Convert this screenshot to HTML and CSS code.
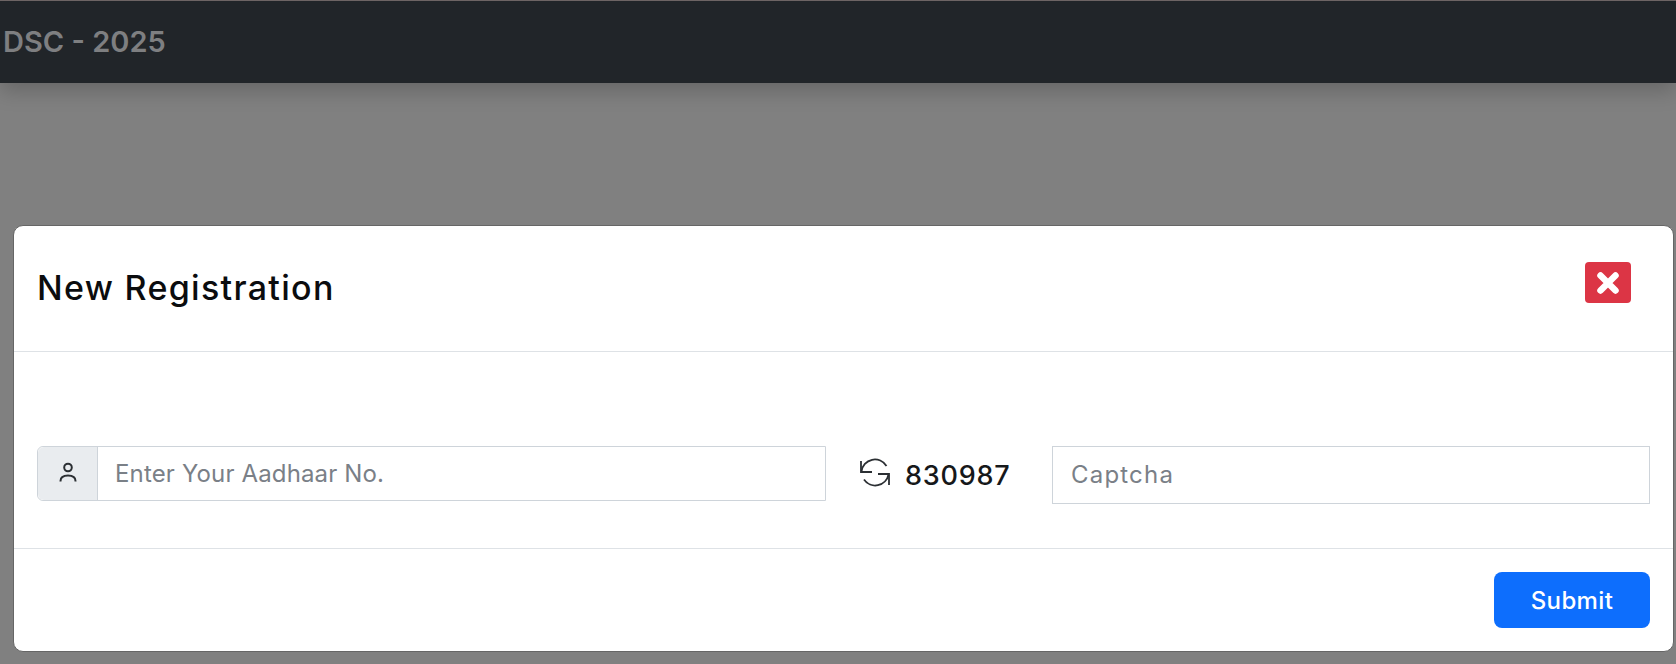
FILE: index.html

```html
<!DOCTYPE html>
<html lang="en">
<head>
  <meta charset="UTF-8">
  <meta name="viewport" content="width=device-width, initial-scale=1.0">
  <title>DSC - 2025</title>
  <link rel="stylesheet" href="styles.css">
</head>
<body>
  <nav class="navbar">
    <span class="brand">DSC - 2025</span>
  </nav>
  <div class="modal">
    <div class="modal-header">
      <h5 class="modal-title">New Registration</h5>
      <button class="btn-close" type="button" aria-label="Close">
        <svg viewBox="0 0 24 24" width="24" height="24"><path d="M4.500 4.500l15 15M19.500 4.500l-15 15" fill="none" stroke="#fff" stroke-width="6.500" stroke-linecap="round"/></svg>
      </button>
    </div>
    <div class="modal-body">
      <div class="input-group">
        <span class="input-icon">
          <svg viewBox="0 0 20 20" width="20" height="20"><circle cx="10" cy="5.500" r="3.800" fill="none" stroke="#2b2f33" stroke-width="2"/><path d="M2.500 19.500V19c0-3.500 3-5.500 7.500-5.500s7.500 2 7.500 5.500v.5" fill="none" stroke="#2b2f33" stroke-width="2"/></svg>
        </span>
        <input class="aadhaar-input" type="text" placeholder="Enter Your Aadhaar No.">
      </div>
      <div class="captcha">
        <svg class="refresh" viewBox="0 0 32 32" width="32" height="32"><path d="M2.500 15.500A13.500 13.500 0 0 1 27.500 10M29.500 18.500A13.500 13.500 0 0 1 5 23.500" fill="none" stroke="#2b2f33" stroke-width="1.800"/><path d="M2 5v11h11M19 18h11v11" fill="none" stroke="#2b2f33" stroke-width="1.800"/></svg>
        <span class="captcha-code">830987</span>
      </div>
      <input class="captcha-input" type="text" placeholder="Captcha">
    </div>
    <div class="modal-footer">
      <button class="btn-submit" type="button">Submit</button>
    </div>
  </div>
</body>
</html>
```

FILE: styles.css

```css
* {
  box-sizing: border-box;
}
html, body {
  height: 664px;
  overflow: hidden;
}
body {
  margin: 0;
  background-color: #808080;
  font-family: Inter, "Open Sans", sans-serif;
  color: #000;
}
.navbar {
  height: 83px;
  padding-left: 3px;
  display: flex;
  align-items: center;
  background-color: #212529;
  border-top: 1px solid #6d6464;
  box-shadow: 0 8px 20px rgba(0, 0, 0, 0.2);
}
.brand {
  margin-bottom: 2px;
  font-size: 29px;
  font-weight: 600;
  color: #7e7f81;
}
.modal {
  margin: 142px 2px 0 13px;
  height: 427px;
  background-color: #fff;
  border: 1px solid #666;
  border-radius: 10px;
  display: flex;
  flex-direction: column;
}
.modal-header {
  height: 126px;
  padding: 0 42px 0 23px;
  display: flex;
  align-items: center;
  justify-content: space-between;
  border-bottom: 1px solid #dee2e6;
}
.modal-title {
  margin: 0 0 3px;
  font-size: 34px;
  font-weight: 500;
  letter-spacing: 1.3px;
  color: #0b0c0e;
}
.btn-close {
  width: 46px;
  height: 41px;
  margin-bottom: 12px;
  padding: 0;
  display: flex;
  align-items: center;
  justify-content: center;
  background-color: #dc3545;
  border: none;
  border-radius: 4px;
}
.modal-body {
  height: 197px;
  padding: 94px 23px 0 23px;
  display: flex;
  align-items: flex-start;
  border-bottom: 1px solid #dee2e6;
}
.input-group {
  width: 789px;
  height: 55px;
  display: flex;
  border: 1px solid #ced4da;
  border-radius: 6px 0 0 6px;
}
.input-icon {
  width: 60px;
  padding-bottom: 3px;
  display: flex;
  align-items: center;
  justify-content: center;
  background-color: #e9ecef;
  border-right: 1px solid #ced4da;
  border-radius: 6px 0 0 6px;
}
.aadhaar-input, .captcha-input {
  font-family: inherit;
  font-size: 24px;
  outline: none;
  background-color: #fff;
}
.aadhaar-input {
  flex: 1;
  min-width: 0;
  padding: 0 17px;
  border: none;
  letter-spacing: 0.15px;
}
.aadhaar-input::placeholder, .captcha-input::placeholder {
  color: #7a8087;
}
.captcha {
  width: 226px;
  height: 55px;
  padding-left: 33px;
  display: flex;
  align-items: center;
  gap: 14px;
}
.refresh {
  margin-bottom: 4px;
}
.captcha-code {
  margin-top: 4px;
  font-size: 27px;
  font-weight: 500;
  color: #16181a;
  letter-spacing: 0.8px;
}
.captcha-input {
  flex: 1;
  min-width: 0;
  height: 58px;
  padding: 0 18px 2px;
  border: 1px solid #ced4da;
  letter-spacing: 1.2px;
}
.modal-footer {
  flex: 1;
  padding: 23px 23px 0 0;
  display: flex;
  justify-content: flex-end;
  align-items: flex-start;
}
.btn-submit {
  width: 156px;
  height: 56px;
  font-family: inherit;
  font-size: 24px;
  font-weight: 500;
  letter-spacing: 0.4px;
  color: #fff;
  background-color: #0d6efd;
  border: none;
  border-radius: 8px;
}
```
